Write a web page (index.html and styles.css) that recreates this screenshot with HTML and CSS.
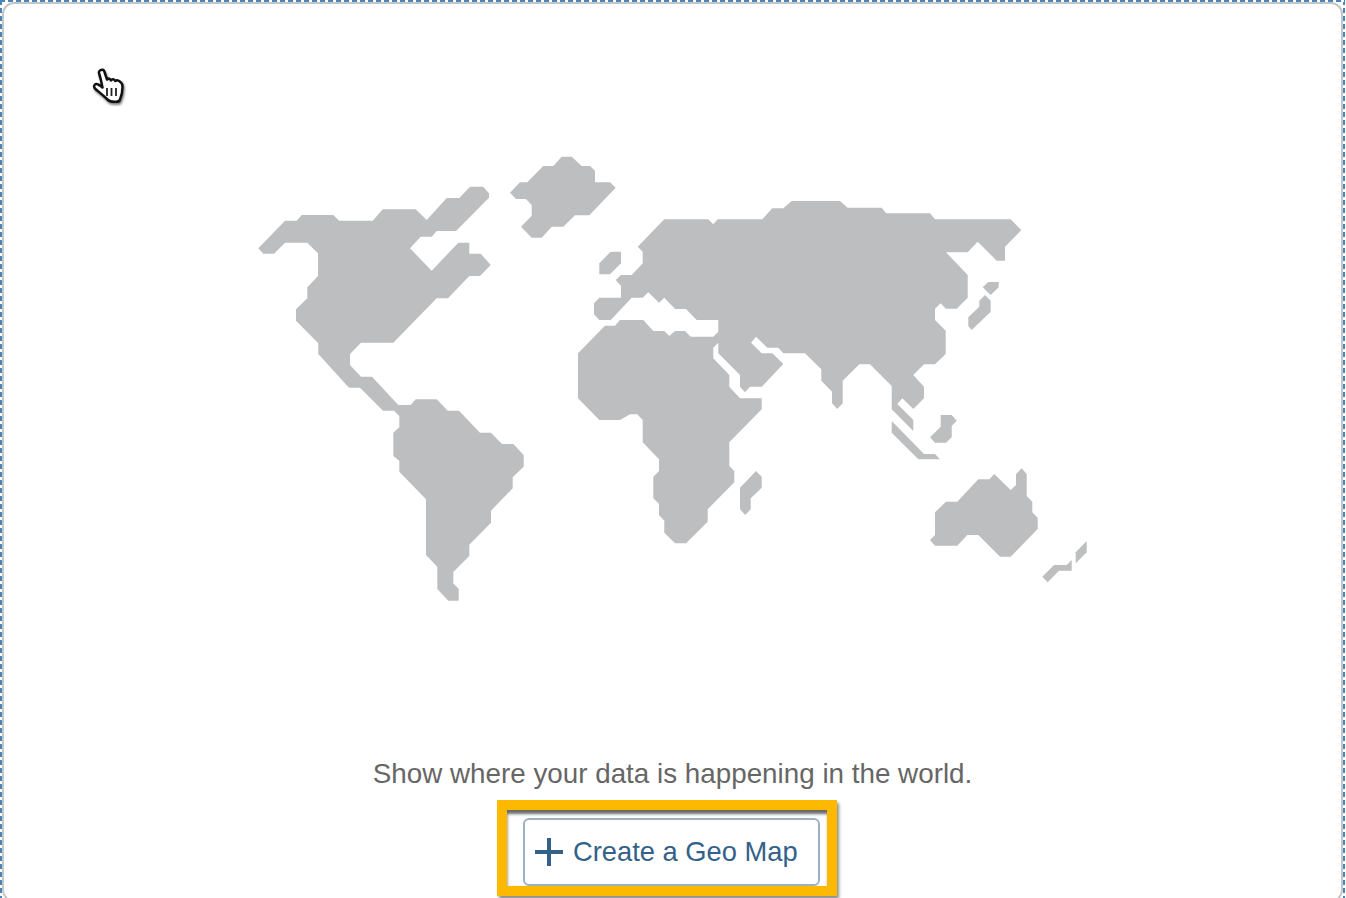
FILE: index.html
```html
<!DOCTYPE html>
<html lang="en">
<head>
<meta charset="utf-8">
<title>Create a Geo Map</title>
<link rel="stylesheet" href="styles.css">
</head>
<body>
<div class="frame">
  <main class="card">
    <svg class="cursor" viewBox="0 0 36 40" aria-hidden="true">
      <path class="cursor-hand" d="M7 2.500C9 1 11 1.500 11.500 4L14 11.500C15.500 10 17 10.500 18 12.500C19.500 10.500 21 11 22.300 13C24 11.500 26 12.500 28 14.500C29.300 15.500 29.500 17 29.500 19C29.500 24 28.500 28 27 31.500C26.500 33 24.500 34 22.500 33.800C19 34 16.500 33.500 14.500 31.500C11 28 6 24 2 20.500C0.500 19 1 16.500 3 16C5 15.500 6.500 17 9.500 19.500C8.500 14 7 8 6 5C5.800 4 6 3 7 2.500Z"/>
      <path class="cursor-bars" d="M14 20V28M18.500 20V28M23 20V28"/>
    </svg>
    <svg class="map" viewBox="258 156 830 446" aria-label="World map" role="img">
      <path class="land" d="M258.300 248.300 285 220.700H296.700L301.700 215H333.300L339.300 220.700H372.700L382.700 209.300H415.700L426.700 220 446.700 198H459.300L470 186.700H483L489 193.300V197.700L456 231H436.700L431.700 236.700H420.700L410 248.300 431.700 270.700 458.300 242.700H469.300V253.700H480.700L490.700 265 480 276H469.300L448 298.300H436.700L393.300 342.700H361L350 354V365L361 376.700H372L398.300 405H410.700L415.700 399.300H436.700L447.700 410.700H459L480 432.700H491L502 444H513.300L523.700 455V466.700L512.700 477.300V488.300L491 510.700V522.700L469.300 544.700V556L453.300 572V583.300L458.700 589V600.700H448.300L437.300 589V566.700L426 555V499.300L399.300 471.700V460.700L393.300 456V432.700L399.300 427.300V416L394 410.700H383L360 387.700H349L318.300 354V343.300L296 320.700V309.300L307.300 298.300V287.300L318 276V253.300L307.300 242.700H285L274 253.700H263.300Z"/>
      <path class="land" d="M510 192.700 520 182.300H527.300L543.300 166H553.300L561.700 156.700H571.700L581.700 166H590L595 170.700V182.300H610L615.700 187.700 589.300 215.300H575L563.300 226.700H551.700L541.700 237.700H531.700L521 226.700 531.700 215.700V205L526 199H516Z"/>
      <path class="land" d="M637.700 246.700 664.300 219.300H708.300L713.300 224.300 717.700 219.300H762.300L772.300 208.300H783.300L791.700 201H840L847.700 207.700H881.700L886 213.300H930L935 219.300H1010.700L1021.300 230 1005 246.700V260.700H996.700L977.700 241.700 967.700 252.300H946L967.700 275V297.700L956.700 308.700H945.700L940.700 303.300 935 308.700V320L945.700 330.700V354L935 364.300H924L913.300 375 924 386.700V398.300L913.300 409 902.300 398.300 897.300 404 913.300 420V431L891.700 409.300V386L870 364.300H859.300L842.700 380.700V403.300L837.300 409 832 403.300V391.700L821.300 380.700V369.300L805 353.300H783.300L778.300 347.700H767.300L756 336.700 751 342.700 761.700 353.300H772.300L783.300 364 761.700 386.700H750L745 392.300 740 386.700V375L718.300 353.300V342.700L713.300 347.700V358.300L729.300 375V386.700L740 398.300H761.700V409.300L729.300 442.300V466L734.300 471V482.300L707.700 509.300V521.700L686 543.300H675L664.300 532.700V520.700L659 515V504L653.300 498.300V476.700L659 471V459.300L642.700 442.300V420L637.300 414.300H630L620 420H599.300L578 398.300V353.300L605 325.700H615L620 320H643.300L653.300 331H664.300L669.300 336 675 331H685L690.700 336.700H713.300L718.300 331.700V320H696.700L686 309H675L664.300 297.700 659 302.700 648.300 292.300 642.700 297.700H631.700L610.700 320H599.300L594 314.300V303.300L599.300 297.700H621V286L615.700 280 621 275H631.700L642.700 263.300V251.700Z"/>
      <path class="land" d="M599.300 263.300 610.700 251.700H621V263.300L610 274.300H599.300Z"/>
      <path class="land" d="M982.700 287.300 988.300 282H998.700V287.300L990.700 295Z"/>
      <path class="land" d="M985 295 990.700 300.700V311.700L971.700 330 968.300 326V317.300L979.300 306.700V300.700Z"/>
      <path class="land" d="M891.700 421 924 454H935L940 459.300H918.300L891.700 432.700Z"/>
      <path class="land" d="M940.700 415H951.700L956.700 420.700 951.700 426V437.300L946 442.700H935L930 437.300 940.700 426.700Z"/>
      <path class="land" d="M930 540 935 535V512.300L946 501.700H957.300L978.300 479.300H989.300L994.300 474 1010.700 490 1016 485V474L1021.700 468.300 1026.700 474V496L1032.300 501.700V512.300L1037.700 517.700V529L1010.700 556.700H1000L978.300 535H967.300L957.300 545.700H935Z"/>
      <path class="land" d="M1042.300 576.700 1054 565H1066.700L1071.700 560V570.700H1059L1047.700 582.300Z"/>
      <path class="land" d="M1075.700 552.300 1086.700 541V552.300L1075.700 563.300Z"/>
      <path class="land" d="M740 487.700 756 471 761.700 476.700V487.700L750.700 498.300V509.300L745.300 515 740 509.300Z"/>
    </svg>
    <p class="message">Show where your data is happening in the world.</p>
    <div class="highlight">
      <button class="create" type="button">
        <svg class="plus" viewBox="0 0 28 28" aria-hidden="true"><path d="M14 0V28M0 14H28"/></svg>
        <span>Create a Geo Map</span>
      </button>
    </div>
  </main>
</div>
</body>
</html>
```
FILE: styles.css
```css
html, body {
  margin: 0;
  height: 100%;
  overflow: hidden;
  background: #fff;
}

.frame {
  box-sizing: border-box;
  height: 904px;
  margin-right: 1px;
  padding: 2px;
  background-color: #fff;
  background-image:
    repeating-linear-gradient(90deg, #4a84b8 0 5px, #fff 5px 8px),
    repeating-linear-gradient(180deg, #4a84b8 0 5px, #fff 5px 8px),
    repeating-linear-gradient(180deg, #4a84b8 0 5px, #fff 5px 8px);
  background-size: 100% 2px, 2px 100%, 2px 100%;
  background-position: 0 0, 0 0, 100% 0;
  background-repeat: no-repeat;
}

.card {
  position: relative;
  box-sizing: border-box;
  height: 100%;
  display: flex;
  flex-direction: column;
  align-items: center;
  padding-top: 152px;
  background: #fff;
  border: 2px solid #c4c5c7;
  border-radius: 12px;
  font-family: "Liberation Sans", Arial, sans-serif;
}

.cursor {
  position: absolute;
  left: 89px;
  top: 64px;
  width: 36px;
  height: 40px;
  overflow: visible;
  filter: blur(0.4px) drop-shadow(1px 2px 1px rgba(0, 0, 0, 0.5));
}

.cursor-hand {
  fill: #fff;
  stroke: #111;
  stroke-width: 2.500;
  stroke-linejoin: round;
}

.cursor-bars {
  fill: none;
  stroke: #222;
  stroke-width: 1.800;
}

.map {
  display: block;
  width: 830px;
  height: 446px;
  flex: none;
}

.land {
  fill: #bdbec0;
}

.message {
  margin: 153px 0 0;
  color: #666;
  font-size: 27.800px;
  line-height: 38px;
  white-space: nowrap;
}

.highlight {
  box-sizing: border-box;
  width: 340px;
  height: 96px;
  margin: 7px 11px 0 0;
  padding: 8px 7px 0 16px;
  border: 10px solid #fdb900;
  background: #fff;
  box-shadow: inset 0 5px 3px -1px #6a6a6a, inset 2px 0 3px -1px #bbb, 2px 3px 3px rgba(0, 0, 0, 0.45);
}

.create {
  box-sizing: border-box;
  display: flex;
  align-items: center;
  gap: 10px;
  width: 297px;
  height: 68px;
  padding: 0 0 0 10px;
  background: #fff;
  border: 2px solid #9cb1c6;
  border-radius: 6px;
  color: #33618a;
  font-family: inherit;
  font-size: 27.300px;
  white-space: nowrap;
}

.plus {
  width: 28px;
  height: 28px;
  flex: none;
}

.plus path {
  fill: none;
  stroke: #33618a;
  stroke-width: 4;
}
```
